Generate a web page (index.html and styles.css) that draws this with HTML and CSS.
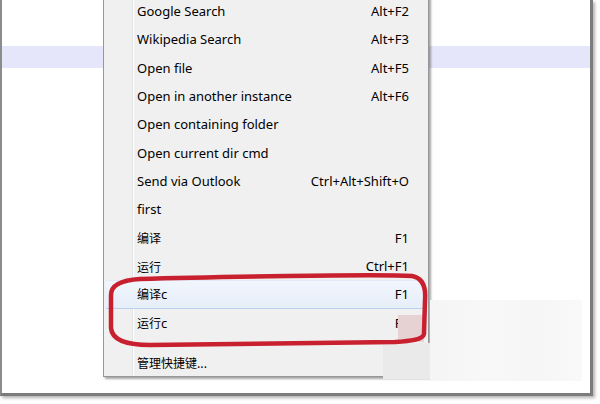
FILE: index.html
```html
<!DOCTYPE html>
<html>
<head>
<meta charset="utf-8">
<link rel="stylesheet" href="styles.css">
</head>
<body>
<div class="frame">
  <div class="band"></div>
</div>

<div class="menu">
  <div class="item"><span>Google Search</span><span class="key">Alt+F2</span></div>
  <div class="item"><span>Wikipedia Search</span><span class="key">Alt+F3</span></div>
  <div class="item"><span>Open file</span><span class="key">Alt+F5</span></div>
  <div class="item"><span>Open in another instance</span><span class="key">Alt+F6</span></div>
  <div class="item"><span>Open containing folder</span></div>
  <div class="item"><span>Open current dir cmd</span></div>
  <div class="item"><span>Send via Outlook</span><span class="key">Ctrl+Alt+Shift+O</span></div>
  <div class="item"><span>first</span></div>
  <div class="item"><span class="cjk">编译</span><span class="key">F1</span></div>
  <div class="item"><span class="cjk">运行</span><span class="key">Ctrl+F1</span></div>
  <div class="item hot"><span><span class="cjk">编译</span>c</span><span class="key">F1</span></div>
  <div class="item"><span><span class="cjk">运行</span>c</span><span class="key">F1</span></div>
  <div class="sep"></div>
  <div class="item"><span class="cjk">管理快捷键...</span></div>
</div>

<div class="patch patch-out"></div>
<div class="patch patch-in"></div>
<div class="patch patch-pink"></div>

<svg class="mark" width="600" height="404" viewBox="0 0 600 404">
  <path d="M140 279 C200 277 380 274 412 276 C423 278 426 288 425 300 L424 334 C423 340 410 341 395 342 L150 345 C125 345 112 340 111 328 L111 295 C111 285 122 280 140 279 Z" fill="none" stroke="#c8202f" stroke-width="4.5" stroke-linejoin="round"/>
</svg>
</body>
</html>
```

FILE: styles.css
```css
html, body {
  margin: 0;
  padding: 0;
}
body {
  width: 600px;
  height: 404px;
  overflow: hidden;
  background: #ffffff;
  position: relative;
  font-family: "Noto Sans", "Noto Sans CJK SC", sans-serif;
}
.frame {
  width: 588px;
  height: 347px;
  padding-top: 46px;
  background: #ffffff;
  border-left: 2px solid #8c8c8c;
  border-right: 3px solid #7c7c7c;
  border-bottom: 3px solid #7c7c7c;
  box-shadow: 2px 2px 3px rgba(0, 0, 0, 0.3);
}
.band {
  height: 22px;
  background: #e6e6fa;
}
.menu {
  position: absolute;
  left: 103px;
  top: -4px;
  width: 324px;
  border: 1px solid #979797;
  background: #f0f0f0 linear-gradient(to right, transparent 28px, #e2e3e3 28px, #e2e3e3 29px, #ffffff 29px, #ffffff 30px, transparent 30px);
  box-shadow: 2px 2px 2px rgba(0, 0, 0, 0.35);
  font-size: 13px;
  color: #000000;
}
.item {
  height: 28.33px;
  display: flex;
  align-items: center;
  justify-content: space-between;
  padding: 0 19px 0 33px;
  box-sizing: border-box;
}
.cjk {
  font-family: "Noto Sans CJK SC", sans-serif;
  font-size: 12px;
}
.key {
  text-align: right;
}
.hot {
  margin: 0 2px;
  padding: 0 17px 0 31px;
  background: linear-gradient(#f1f6fc, #e6eef9);
  border-top: 1px solid #e1eaf6;
  border-bottom: 1px solid #b9d0ee;
}
.sep {
  height: 11px;
}
.patch {
  position: absolute;
}
.patch-out {
  left: 430px;
  top: 300px;
  width: 152px;
  height: 81px;
  background: linear-gradient(to right, #f5f5f5, #f8f8f8 40%, #f6f6f6 70%, #f9f9f9);
}
.patch-in {
  left: 383px;
  top: 343px;
  width: 47px;
  height: 36px;
  background: #eaeaea;
}
.patch-pink {
  left: 398px;
  top: 315px;
  width: 26px;
  height: 27px;
  background: #e6d2d2;
}
.mark {
  position: absolute;
  left: 0;
  top: 0;
}
```
